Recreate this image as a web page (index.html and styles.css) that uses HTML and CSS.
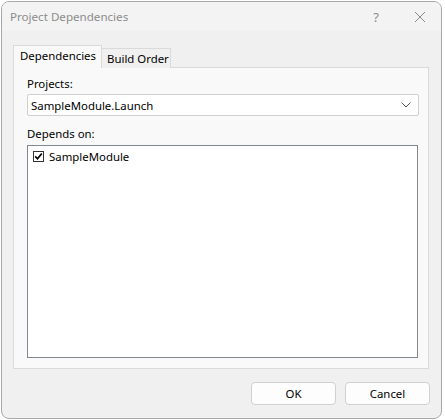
FILE: index.html
```html
<!DOCTYPE html>
<html>
<head>
<meta charset="utf-8">
<link rel="stylesheet" href="styles.css">
</head>
<body>
<div class="window">
  <div class="titlebar">
    <span class="title">Project Dependencies</span>
    <span class="help">?</span>
    <span class="close"><svg width="12" height="12" viewBox="0 0 12 12"><path d="M1 1L11 11M11 1L1 11" stroke="#8a8a8a" stroke-width="1" fill="none"/></svg></span>
  </div>
  <div class="content">
    <div class="tabs">
      <div class="tab active">Dependencies</div>
      <div class="tab">Build Order</div>
    </div>
    <div class="panel">
      <div class="label">Projects:</div>
      <div class="combo">
        <span>SampleModule.Launch</span>
        <svg class="chev" width="10" height="6" viewBox="0 0 10 6"><path d="M0.5 0.5L5 5L9.5 0.5" stroke="#555" stroke-width="1" fill="none"/></svg>
      </div>
      <div class="label second">Depends on:</div>
      <div class="list">
        <div class="item">
          <span class="check"><svg width="9" height="9" viewBox="0 0 9 9"><path d="M1.2 4.3L3.5 6.8L7.8 1.5" stroke="#000" stroke-width="1.7" fill="none"/></svg></span>
          <span>SampleModule</span>
        </div>
      </div>
    </div>
    <div class="buttons">
      <button class="btn">OK</button>
      <button class="btn">Cancel</button>
    </div>
  </div>
</div>
</body>
</html>
```
FILE: styles.css
```css
html, body { margin: 0; padding: 0; }
body {
  width: 445px;
  height: 420px;
  background: #ffffff;
  font-family: "Noto Sans", "Open Sans", sans-serif;
  font-size: 11.4px;
  overflow: hidden;
}
.window {
  margin: 1px 0 0 1px;
  width: 441px;
  height: 418px;
  box-sizing: border-box;
  border: 1px solid #a8a8a8;
  border-radius: 8px;
  background: #f0f0f0;
  display: flex;
  flex-direction: column;
  overflow: hidden;
}
.titlebar {
  height: 29px;
  background: #f3f3f3;
  display: flex;
  align-items: center;
  color: #8c8c8c;
  flex-shrink: 0;
  font-size: 11.6px;
}
.title { padding-left: 8px; flex: 1; }
.help { width: 14px; margin-right: 31px; font-size: 13px; text-align: center; }
.close { width: 12px; margin-right: 15px; display: flex; }
.content {
  flex: 1;
  display: flex;
  flex-direction: column;
  padding: 13px 12px 0 11px;
}
.tabs { display: flex; align-items: flex-end; height: 23px; }
.tab {
  box-sizing: border-box;
  white-space: nowrap;
  border: 1px solid #dadada;
  border-bottom: none;
  background: #f0f0f0;
  color: #000;
  padding: 0 0 0 5px;
  height: 20px;
  line-height: 20px;
  margin-bottom: -1px;
  position: relative;
}
.tab.active {
  height: 23px;
  line-height: 20px;
  background: #f9f9f9;
  padding: 0 0 0 6px;
  z-index: 1;
  width: 89px;
}
.tab:not(.active) { width: 69px; border-left: none; }
.panel {
  box-sizing: border-box;
  height: 302px;
  border: 1px solid #dadada;
  background: #f9f9f9;
  padding: 6px 9px 10px 13px;
  display: flex;
  flex-direction: column;
}
.label { height: 20px; line-height: 20px; }
.label.second { margin-top: 8px; margin-bottom: 1px; }
.combo {
  box-sizing: border-box;
  height: 22px;
  border: 1px solid #d0d0d0;
  border-radius: 2px;
  background: #fff;
  display: flex;
  align-items: center;
  padding: 0 7px 0 3px;
}
.combo span { flex: 1; }
.list {
  flex: 1;
  box-sizing: border-box;
  border: 1px solid #828790;
  background: #fff;
  padding: 5px 5px;
  margin-right: 1px;
}
.item { display: flex; align-items: center; height: 11px; }
.check {
  box-sizing: border-box;
  width: 11px;
  height: 11px;
  border: 1px solid #333;
  display: flex;
  align-items: center;
  justify-content: center;
  margin-right: 5px;
  margin-left: 0;
  background: #fff;
}
.buttons {
  display: flex;
  justify-content: flex-end;
  gap: 9px;
  margin-top: 13px;
  margin-right: -1px;
}
.btn {
  box-sizing: border-box;
  width: 85px;
  height: 23px;
  border: 1px solid #d0d0d0;
  border-radius: 4px;
  background: #fdfdfd;
  font-family: inherit;
  font-size: 11.4px;
  color: #000;
  padding: 0;
}
```
